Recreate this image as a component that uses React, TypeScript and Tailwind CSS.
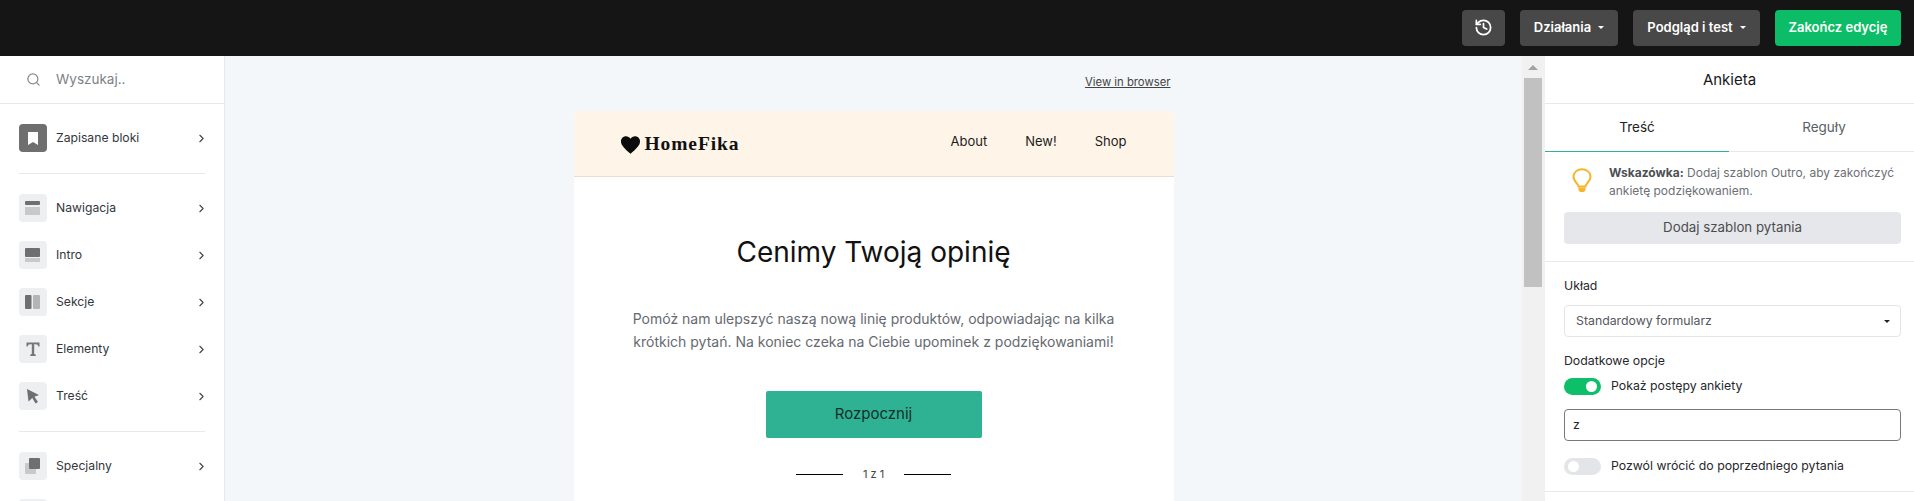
import { ChevronRight, History, Search } from "lucide-react";
import type { ReactNode } from "react";

const Caret = ({ className = "border-t-white" }: { className?: string }) => (
  <span className={`inline-block w-0 h-0 border-x-[3px] border-x-transparent border-t-[3px] ${className}`} />
);

const SideRow = ({ label, icon, dark }: { label: string; icon: ReactNode; dark?: boolean }) => (
  <div className="flex items-center h-[28px] pl-[19px] pr-[16px]">
    <div className={`w-[28px] h-[28px] rounded-[4px] flex items-center justify-center shrink-0 ${dark ? "bg-[#6f6f6f]" : "bg-[#eeeff1]"}`}>
      {icon}
    </div>
    <span className="ml-[9px] text-[12.2px] text-[#33363b] flex-1">{label}</span>
    <ChevronRight size={13} strokeWidth={2} className="text-[#444]" />
  </div>
);

const Toggle = ({ on }: { on?: boolean }) => (
  <div className={`w-[37px] h-[17px] rounded-full flex items-center px-[4px] shrink-0 ${on ? "bg-[#0dbf68] justify-end" : "bg-[#e4e5e8] justify-start"}`}>
    <div className="w-[11px] h-[11px] rounded-full bg-white" />
  </div>
);

const Sidebar = () => (
  <aside className="w-[225px] shrink-0 bg-white border-r border-[#e8e9ec] flex flex-col">
    <div className="h-[48px] shrink-0 flex items-center border-b border-[#e8e9ec] pl-[26px]">
      <Search size={15} className="text-[#8a8a8a]" />
      <span className="ml-[15px] text-[13.5px] text-[#7b7f85]">Wyszukaj..</span>
    </div>
    <div className="pt-[20px]">
      <SideRow
        label="Zapisane bloki"
        dark
        icon={
          <svg width="12" height="15" viewBox="0 0 12 15">
            <path d="M1 1h10v13L6 11l-5 3z" fill="#fff" />
          </svg>
        }
      />
    </div>
    <div className="mx-[19px] mt-[21px] mb-[20px] border-t border-[#e8e9ec]" />
    <div className="flex flex-col gap-[19px]">
      <SideRow
        label="Nawigacja"
        icon={
          <svg width="16" height="16" viewBox="0 0 16 16">
            <rect y="1" width="15" height="4" rx="1" fill="#6f6f6f" />
            <rect y="7" width="15" height="8" fill="#c9c9c9" />
          </svg>
        }
      />
      <SideRow
        label="Intro"
        icon={
          <svg width="16" height="16" viewBox="0 0 16 16">
            <rect y="1" width="15" height="9" rx="1" fill="#6f6f6f" />
            <rect y="11" width="15" height="4" fill="#c9c9c9" />
          </svg>
        }
      />
      <SideRow
        label="Sekcje"
        icon={
          <svg width="16" height="16" viewBox="0 0 16 16">
            <rect y="1" width="6.500" height="14" rx="1" fill="#6f6f6f" />
            <rect x="8" y="1" width="7" height="14" rx="1" fill="#b5b5b5" />
          </svg>
        }
      />
      <SideRow
        label="Elementy"
        icon={
          <svg width="14" height="14" viewBox="0 0 14 14">
            <path d="M0.500 0.500h13v4h-1.200c-.3-1.500-1-2.200-2.600-2.200H8.200v9.700l1.500.5V14H4.300v-1.500l1.500-.5V2.300H4.300c-1.600 0-2.300.7-2.600 2.200H.5z" fill="#777" />
          </svg>
        }
      />
      <SideRow
        label="Treść"
        icon={
          <svg width="14" height="16" viewBox="0 0 14 16">
            <path d="M1 1l12 6-4.500 1.800L12 14l-2.500 1.500L6.300 10 2.500 13.500z" fill="#6f6f6f" />
          </svg>
        }
      />
    </div>
    <div className="mx-[19px] mt-[21px] mb-[20px] border-t border-[#e8e9ec]" />
    <div className="flex flex-col gap-[19px]">
      <SideRow
        label="Specjalny"
        icon={
          <svg width="16" height="16" viewBox="0 0 16 16">
            <rect x="0" y="5" width="11" height="11" rx="1" fill="#c9c9c9" />
            <rect x="4" y="0" width="11" height="11" rx="1" fill="#6f6f6f" />
          </svg>
        }
      />
      <SideRow label="" icon={null} />
    </div>
  </aside>
);

const EmailPreview = () => (
  <main className="flex-1 min-w-0 bg-[#f3f7fa] overflow-hidden flex flex-col items-center">
    <div className="w-[600px] h-[55px] shrink-0 pt-[18px] text-right text-[11.300px] text-[#444] px-[3px]">
      <span className="underline">View in browser</span>
    </div>
    <div className="w-[600px] flex-1 bg-white rounded-t-[5px]">
      <div className="h-[66px] bg-[#fff4e8] border-b border-[#eadfce] rounded-t-[5px] flex items-center pl-[47px] pr-[47px]">
        <svg width="19" height="18" viewBox="0 0 24 22" className="shrink-0 mt-[2px]">
          <path d="M12 22C5 16 0 11.500 0 6.500 0 2.800 2.800 0 6.300 0 8.600 0 10.800 1.200 12 3.200 13.200 1.200 15.400 0 17.700 0 21.200 0 24 2.800 24 6.500 24 11.500 19 16 12 22z" fill="#0b0b0b" />
        </svg>
        <span className="ml-[5px] font-['Liberation_Serif',serif] font-bold text-[19.500px] text-[#111] tracking-[0.9px] mt-[1px]">HomeFika</span>
        <nav className="ml-auto flex gap-[38px] text-[13px] text-[#1c1c1c] -mt-[4px]">
          <span>About</span>
          <span>New!</span>
          <span>Shop</span>
        </nav>
      </div>
      <div className="flex flex-col items-center">
        <h1 className="mt-[57px] text-[28px] leading-[36px] font-normal text-[#111]">
          Cenimy Twoją opinię
        </h1>
        <p className="mt-[37px] w-[520px] text-center text-[14px] leading-[23px] text-[#666a70]">
          Pomóż nam ulepszyć naszą nową linię produktów, odpowiadając na kilka krótkich pytań. Na koniec czeka na Ciebie upominek z podziękowaniami!
        </p>
        <div className="mt-[38px] w-[216px] h-[47px] bg-[#2fb193] rounded-[2px] flex items-center justify-center text-[15px] text-[#14302a]">
          Rozpocznij
        </div>
        <div className="mt-[28px] flex items-center text-[11px] text-[#444]">
          <span className="w-[47px] border-t border-black" />
          <span className="w-[61px] text-center">1 z 1</span>
          <span className="w-[47px] border-t border-black" />
        </div>
      </div>
    </div>
  </main>
);

const FakeScrollbar = () => (
  <div className="w-[23px] shrink-0 bg-[#f1f1f1] flex flex-col pl-[2px] pr-[3px]">
    <div className="h-[22px] flex items-center justify-center">
      <span className="w-0 h-0 border-x-[5px] border-x-transparent border-b-[5px] border-b-[#a3a3a3]" />
    </div>
    <div className="h-[209px] bg-[#c1c1c1]" />
  </div>
);

const RightPanel = () => (
  <aside className="w-[369px] shrink-0 bg-white flex flex-col">
    <div className="h-[48px] shrink-0 border-b border-[#e8e9ec] flex items-center justify-center text-[15px] text-[#17181a] pt-[1px]">
      Ankieta
    </div>
    <div className="h-[48px] shrink-0 border-b border-[#e8e9ec] flex text-[13.5px]">
      <div className="w-[184px] -mb-px border-b border-[#2fb193] flex items-center justify-center text-[#222]">Treść</div>
      <div className="flex-1 flex items-center justify-center text-[#5b5f65] pl-[5px]">Reguły</div>
    </div>
    <div className="h-[110px] shrink-0 border-b border-[#e8e9ec] px-[19px] pt-[12px]">
      <div className="flex">
        <svg width="20" height="25" viewBox="0 0 20 25" className="ml-[8px] mt-[4px] shrink-0">
          <path d="M6.500 18.500c0-2.500-5-5-5-9.800C1.500 4.500 5.200 1.200 10 1.200s8.500 3.300 8.500 7.500c0 4.800-5 7.300-5 9.800z" fill="none" stroke="#f7b52c" strokeWidth="2" />
          <path d="M6.500 19.500h7v2.500l-1.500 2H8l-1.500-2z" fill="#f7b52c" />
        </svg>
        <p className="ml-[17px] text-[12px] leading-[18px] text-[#6c7076]">
          <b className="font-bold text-[#4c4f53]">Wskazówka:</b> Dodaj szablon Outro, aby zakończyć ankietę podziękowaniem.
        </p>
      </div>
      <div className="mt-[12px] -mr-[6px] h-[32px] rounded-[4px] bg-[#e6e7ea] flex items-center justify-center text-[13.300px] text-[#4a4c50]">
        Dodaj szablon pytania
      </div>
    </div>
    <div className="h-[230px] shrink-0 border-b border-[#e8e9ec] pl-[19px] pr-[13px] pt-[15px] text-[12.300px] text-[#26282b]">
      <div className="leading-[18px]">Układ</div>
      <div className="mt-[10px] h-[32px] rounded-[4px] border border-[#e4e5e8] pl-[11px] pr-[10px] flex items-center justify-between text-[#55585d]">
        Standardowy formularz
        <Caret className="border-t-[#222]" />
      </div>
      <div className="mt-[15px] leading-[18px]">Dodatkowe opcje</div>
      <div className="mt-[7px] flex items-center gap-[10px]">
        <Toggle on />
        <span>Pokaż postępy ankiety</span>
      </div>
      <div className="mt-[14px] h-[32px] rounded-[4px] border border-[#77797d] pl-[8px] flex items-center">z</div>
      <div className="mt-[16px] flex items-center gap-[10px]">
        <Toggle />
        <span>Pozwól wrócić do poprzedniego pytania</span>
      </div>
    </div>
  </aside>
);

export default function App() {
  return (
    <div className="w-[1914px] h-[501px] overflow-hidden flex flex-col font-['Inter',sans-serif]">
      <header className="h-[56px] shrink-0 bg-[#151515] flex items-center justify-end gap-[15px] pr-[13px] pb-[1px] text-[13px] font-semibold text-white">
        <div className="w-[43px] h-[36px] rounded-[4px] bg-[#484848] flex items-center justify-center">
          <History size={19} strokeWidth={2.2} />
        </div>
        <div className="w-[98px] h-[36px] rounded-[4px] bg-[#484848] flex items-center justify-center gap-[7px]">
          Działania <Caret />
        </div>
        <div className="w-[127px] h-[36px] rounded-[4px] bg-[#484848] flex items-center justify-center gap-[7px]">
          Podgląd i test <Caret />
        </div>
        <div className="w-[126px] h-[36px] rounded-[4px] bg-[#0cbc66] flex items-center justify-center">
          Zakończ edycję
        </div>
      </header>
      <div className="flex-1 min-h-0 flex">
        <Sidebar />
        <EmailPreview />
        <FakeScrollbar />
        <RightPanel />
      </div>
    </div>
  );
}
